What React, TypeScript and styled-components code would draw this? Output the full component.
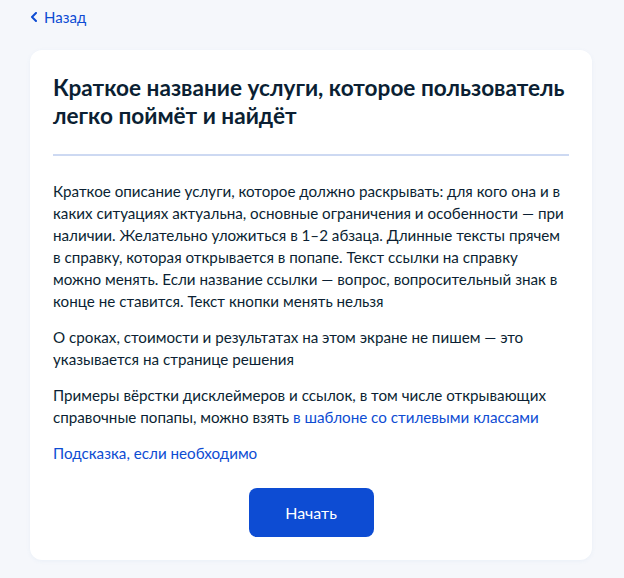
import styled, { createGlobalStyle } from 'styled-components';

const GlobalStyle = createGlobalStyle`
  html, body {
    margin: 0;
    background: #f5f7fb;
  }
  body {
    font-family: Lato, "Noto Sans", sans-serif;
    color: #0b1f33;
  }
`;

const Page = styled.div`
  padding: 6px 32px 18px 30px;
`;

const BackLink = styled.a`
  display: inline-flex;
  align-items: center;
  gap: 6px;
  height: 22px;
  color: #0d4cd3;
  font-size: 15px;
  text-decoration: none;
  cursor: pointer;
  margin-bottom: 22px;
`;

const Card = styled.div`
  background: #ffffff;
  border-radius: 12px;
  padding: 24px 23px 23px;
  box-shadow: 0 1px 4px rgba(102, 150, 204, 0.08);
`;

const Title = styled.h1`
  margin: 0;
  font-size: 22.6px;
  line-height: 28px;
  font-weight: 700;
  color: #0b1f33;
`;

const Divider = styled.hr`
  margin: 24px 0 24px;
  border: 0;
  height: 2px;
  background: #cdd9f2;
`;

const Text = styled.p`
  margin: 0 0 14px;
  font-size: 15.2px;
  line-height: 22px;
  color: #0b1f33;
`;

const Link = styled.a`
  color: #0d4cd3;
  text-decoration: none;
  cursor: pointer;
`;

const Hint = styled.div`
  font-size: 15.2px;
  line-height: 22px;
  color: #0d4cd3;
  margin-top: 11px;
`;

const Actions = styled.div`
  display: flex;
  justify-content: center;
  margin-top: 24px;
`;

const Button = styled.button`
  width: 125px;
  height: 49px;
  border: 0;
  border-radius: 8px;
  background: #0d4cd3;
  color: #ffffff;
  font-family: Lato, "Noto Sans", sans-serif;
  font-size: 16px;
  cursor: pointer;
`;

export default function App() {
    return (
        <>
            <GlobalStyle />
            <Page>
                <BackLink>
                    <svg width="8" height="10" viewBox="0 0 8 10" fill="none">
                        <path d="M6 1L2 5l4 4" stroke="#0d4cd3" strokeWidth="2" strokeLinecap="round" strokeLinejoin="round" />
                    </svg>
                    Назад
                </BackLink>
                <Card>
                    <Title>Краткое название услуги, которое пользователь легко поймёт и найдёт</Title>
                    <Divider />
                    <Text>
                        Краткое описание услуги, которое должно раскрывать: для кого она и в
                        каких ситуациях актуальна, основные ограничения и особенности — при
                        наличии. Желательно уложиться в 1–2 абзаца. Длинные тексты прячем
                        в справку, которая открывается в попапе. Текст ссылки на справку
                        можно менять. Если название ссылки — вопрос, вопросительный знак в
                        конце не ставится. Текст кнопки менять нельзя
                    </Text>
                    <Text>
                        О сроках, стоимости и результатах на этом экране не пишем — это
                        указывается на странице решения
                    </Text>
                    <Text>
                        Примеры вёрстки дисклеймеров и ссылок, в том числе открывающих
                        справочные попапы, можно взять <Link>в шаблоне со стилевыми классами</Link>
                    </Text>
                    <Hint>Подсказка, если необходимо</Hint>
                    <Actions>
                        <Button>Начать</Button>
                    </Actions>
                </Card>
            </Page>
        </>
    );
}
